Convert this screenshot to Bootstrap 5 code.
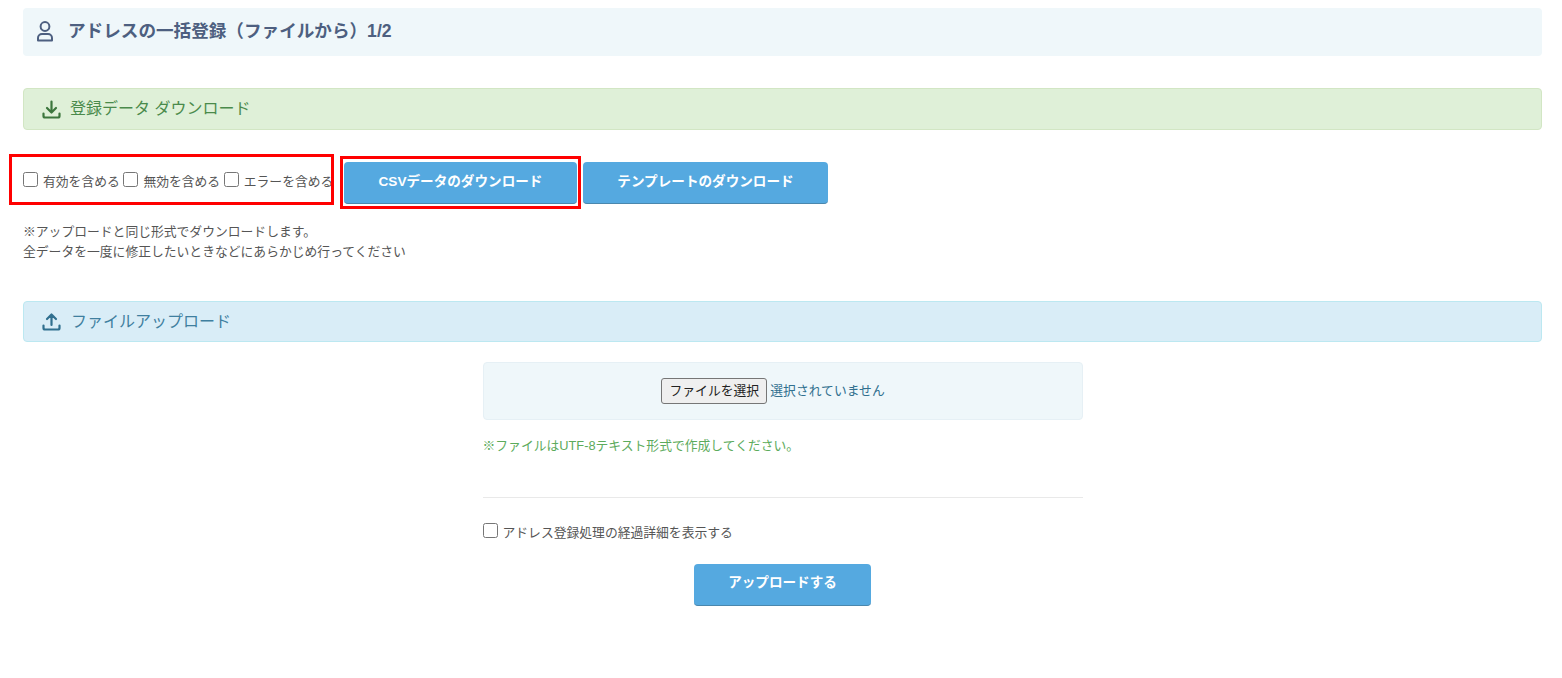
<!DOCTYPE html>
<html lang="ja">
<head>
<meta charset="utf-8">
<title>アドレスの一括登録</title>
<link href="https://cdn.jsdelivr.net/npm/bootstrap@5.3.0/dist/css/bootstrap.min.css" rel="stylesheet">
<style>
body{font-family:"Liberation Sans","Noto Sans CJK JP",sans-serif;font-size:12.8px;color:#555;background:#fff;line-height:20px}
.page-wrap{padding:8px 20px 0 23px}
.title-bar{height:48px;background:#eff7fa;border-radius:4px;padding-left:13px;gap:12px;color:#4d5f80}
.title-bar h1{font-size:17.6px;font-weight:700;margin:0;color:#4d5f80}
.sec-bar{height:42px;border-radius:4px;border:1px solid;padding-left:18px;gap:9px;font-size:16px}
.sec-green{margin-top:32px;background:#dff0d8;border-color:#d2e6c4;color:#4a8a4b}
.sec-blue{margin-top:39px;background:#d9edf7;border-color:#bce8f1;color:#3f7f9f;height:41px;gap:10px}
.dl-row{margin-top:32px;height:42px}
.checks{width:317px;height:42px;position:relative;gap:3.6px;padding-bottom:2px}
.checks::after,.primary-wrap::after{content:"";position:absolute;border:3px solid #f00;pointer-events:none}
.checks::after{left:-14px;right:6px;top:-8px;bottom:-1px}
.primary-wrap{position:relative;margin-left:4px;margin-right:6px}
.primary-wrap::after{inset:-6px -4px -5px -4px}
.chk{width:15px;height:15px;margin:0;flex:none;position:relative;top:-3px}
.chk-label{display:inline-flex;align-items:center;gap:5px;margin:0;white-space:nowrap}
.act-btn{height:42px;background:#55a9e0;color:#fff;border:0;border-bottom:1px solid #4a87ad;border-radius:4px;font-weight:700;font-size:13.6px;padding:0 0 2px;line-height:20px}
.act-btn:hover{background:#55a9e0;color:#fff}
.btn-csv{width:233px}.btn-tpl{width:245px}.btn-up{width:177px}
.note{margin-top:18px}
.center-col{width:600px;margin:20px auto 0}
.file-box{height:58px;background:#eff7fa;border:1px solid #e6f0f5;border-radius:4px;color:#31708f;gap:3px;padding-right:19px}
.file-btn{font-size:12.8px;height:26px;width:106px;padding:0;background:#efefef;border:1px solid #767676;border-radius:3px;color:#222;line-height:22px}
.hint{color:#5cab5c;margin-top:16px}
.divider{margin:41px 0 0;border:0;border-top:1px solid #e9e9e9;opacity:1}
.detail{margin-top:25px}
.up-row{margin-top:17px}
</style>
</head>
<body>
<div class="page-wrap">
  <div class="title-bar d-flex align-items-center">
    <svg width="20" height="22" viewBox="0 0 20 22" fill="none" stroke="#4d5f80" stroke-width="2"><circle cx="9" cy="5.500" r="4.400"/><path d="M2 19.500v-2.500c0-2.400 1.800-4 4-4h6c2.200 0 4 1.600 4 4v2.500z" stroke-linejoin="round"/></svg>
    <h1>アドレスの一括登録（ファイルから）1/2</h1>
  </div>

  <div class="sec-bar sec-green d-flex align-items-center">
    <svg width="19" height="19" viewBox="0 0 19 19" fill="none" stroke="#3c763d" stroke-width="2.200" stroke-linecap="round" stroke-linejoin="round"><path d="M9.500 1.500v10.500M5 8l4.500 4.500L14 8M1.500 13.500v2.500c0 1 .6 1.500 1.500 1.500h13c.9 0 1.500-.5 1.500-1.500v-2.500"/></svg>
    <span>登録データ ダウンロード</span>
  </div>

  <div class="dl-row d-flex align-items-center">
    <div class="checks d-flex align-items-center">
      <label class="chk-label"><input class="chk" type="checkbox"><span>有効を含める</span></label>
      <label class="chk-label"><input class="chk" type="checkbox"><span>無効を含める</span></label>
      <label class="chk-label"><input class="chk" type="checkbox"><span>エラーを含める</span></label>
    </div>
    <div class="primary-wrap"><button type="button" class="btn act-btn btn-csv d-block">CSVデータのダウンロード</button></div>
    <button type="button" class="btn act-btn btn-tpl">テンプレートのダウンロード</button>
  </div>

  <p class="note mb-0">※アップロードと同じ形式でダウンロードします。<br>全データを一度に修正したいときなどにあらかじめ行ってください</p>

  <div class="sec-bar sec-blue d-flex align-items-center">
    <svg width="19" height="19" viewBox="0 0 19 19" fill="none" stroke="#31708f" stroke-width="2.200" stroke-linecap="round" stroke-linejoin="round"><path d="M9.500 13V2.500M5 7l4.500-4.500L14 7M1.500 13.500v2.500c0 1 .6 1.500 1.500 1.500h13c.9 0 1.500-.5 1.500-1.500v-2.500"/></svg>
    <span>ファイルアップロード</span>
  </div>

  <div class="center-col">
    <div class="file-box d-flex align-items-center justify-content-center">
      <button type="button" class="file-btn">ファイルを選択</button>
      <span>選択されていません</span>
    </div>
    <p class="hint mb-0">※ファイルはUTF-8テキスト形式で作成してください。</p>
    <hr class="divider">
    <div class="detail">
      <label class="chk-label"><input class="chk" type="checkbox"><span>アドレス登録処理の経過詳細を表示する</span></label>
    </div>
    <div class="up-row text-center"><button type="button" class="btn act-btn btn-up">アップロードする</button></div>
  </div>
</div>
</body>
</html>
